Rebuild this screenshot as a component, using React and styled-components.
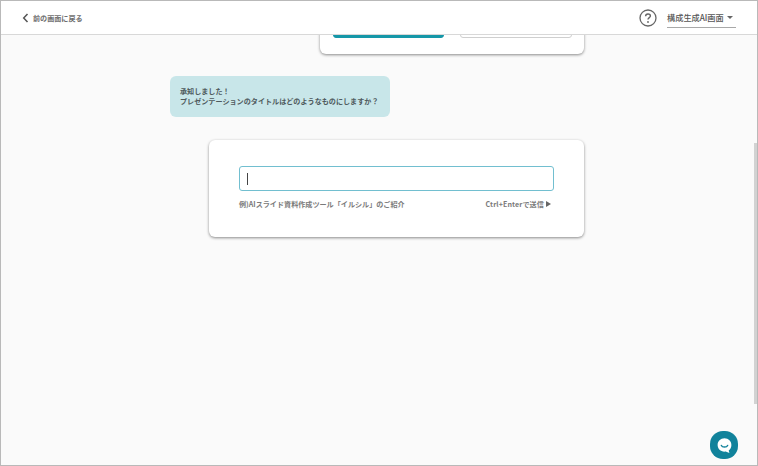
import React from 'react'
import styled, { createGlobalStyle } from 'styled-components'

const GlobalStyle = createGlobalStyle`
  html, body {
    margin: 0;
    padding: 0;
    background: #fff;
  }
  * {
    box-sizing: border-box;
  }
`

const Frame = styled.div`
  position: relative;
  width: 758px;
  height: 466px;
  display: flex;
  flex-direction: column;
  overflow: hidden;
  border: 1px solid #b9b9b9;
  background: #fafafa;
  font-family: "Noto Sans CJK JP", "Noto Sans", sans-serif;
  color: #555;
`

const Header = styled.header`
  position: relative;
  z-index: 2;
  flex: none;
  height: 34px;
  display: flex;
  align-items: center;
  justify-content: space-between;
  padding: 0 21px 0 21px;
  background: #fff;
  border-bottom: 1px solid #d8d8d8;
`

const BackLink = styled.a`
  display: flex;
  align-items: center;
  gap: 4px;
  font-size: 7.1px;
  font-weight: 700;
  color: #6e6e6e;
`

const HeaderRight = styled.div`
  display: flex;
  align-items: center;
  gap: 10px;
`

const ModeSelect = styled.div`
  width: 69px;
  height: 20px;
  display: flex;
  align-items: center;
  justify-content: space-between;
  padding: 0 3px 0 0;
  border-bottom: 1px solid #a8a8a8;
  font-size: 8.2px;
  font-weight: 500;
  white-space: nowrap;
  color: #555;
`

const Caret = styled.span`
  width: 0;
  height: 0;
  border-left: 3px solid transparent;
  border-right: 3px solid transparent;
  border-top: 3px solid #666;
`

const Scroller = styled.main`
  flex: 1;
  overflow: hidden;
`

const Thread = styled.div`
  width: 414px;
  margin: -40px 0 0 169px;
  display: flex;
  flex-direction: column;
`

const PrevCard = styled.div`
  align-self: flex-end;
  width: 264px;
  height: 59px;
  display: flex;
  justify-content: space-between;
  padding: 0 12px 16px 13px;
  background: #fff;
  border-radius: 0 0 6px 6px;
  box-shadow: 0 1px 3px rgba(0, 0, 0, 0.45);
`

const PrevButton = styled.div`
  width: ${props => props.$w}px;
  height: 43px;
  border-radius: 3px;
  background: ${props => (props.$primary ? '#1597a8' : '#fff')};
  border: 1px solid ${props => (props.$primary ? '#1597a8' : '#cfcfcf')};
`

const Bubble = styled.div`
  align-self: flex-start;
  width: 220px;
  height: 41px;
  margin-top: 22px;
  padding: 10px 10px;
  border-radius: 6px;
  background: #c8e6e9;
  font-size: 7.1px;
  font-weight: 700;
  line-height: 10px;
  white-space: nowrap;
  color: #4f5a5d;
`

const InputCard = styled.section`
  align-self: flex-end;
  width: 375px;
  height: 97px;
  margin-top: 23px;
  padding: 26px 30px 0 30px;
  border-radius: 6px;
  background: #fff;
  box-shadow: 0 1px 3px rgba(0, 0, 0, 0.45);
`

const TitleField = styled.div`
  height: 25px;
  display: flex;
  align-items: center;
  padding-left: 7px;
  border: 1px solid #72bfd0;
  border-radius: 3px;
  background: #fff;
`

const TextCursor = styled.span`
  width: 1px;
  height: 12px;
  background: #444;
`

const HintRow = styled.div`
  display: flex;
  justify-content: space-between;
  align-items: center;
  margin-top: 7px;
  padding-right: 3px;
  font-size: 7.1px;
  font-weight: 700;
  line-height: 12px;
  color: #7a7a7a;
`

const SendHint = styled.span`
  display: flex;
  align-items: center;
  gap: 2px;
  letter-spacing: 0.1px;
`

const SendArrow = styled.span`
  width: 0;
  height: 0;
  border-top: 3.5px solid transparent;
  border-bottom: 3.5px solid transparent;
  border-left: 5px solid #666;
`

const ScrollThumb = styled.div`
  position: absolute;
  top: 142px;
  right: 0;
  width: 3px;
  height: 261px;
  background: #d2d2d2;
`

const ChatButton = styled.button`
  position: absolute;
  right: 19px;
  bottom: 6px;
  width: 28px;
  height: 28px;
  display: flex;
  align-items: center;
  justify-content: center;
  padding: 0;
  border: none;
  border-radius: 13px;
  background: #11829b;
`

const BackIcon = () => (
  <svg width="7" height="10" viewBox="0 0 7 10" fill="none" stroke="#555" strokeWidth="1.5">
    <path d="M5.5 1L1.7 5L5.5 9" />
  </svg>
)

const HelpIcon = () => (
  <svg width="18" height="18" viewBox="0 0 18 18" fill="none" stroke="#666" strokeWidth="1.3">
    <circle cx="9" cy="9" r="8" />
    <path d="M6.6 7.2C6.6 5.8 7.7 5 9 5C10.4 5 11.4 5.8 11.4 7C11.4 8.6 9 8.7 9 10.6" strokeWidth="1.4" />
    <circle cx="9" cy="13" r="0.9" fill="#666" stroke="none" />
  </svg>
)

const ChatIcon = () => (
  <svg width="17" height="17" viewBox="0 0 19 19">
    <path d="M9.5 1.5C14 1.5 17.2 4.8 17.2 9C17.2 11.8 16 13.8 14.2 15L15 17.8L10.8 16.3C10.4 16.4 9.9 16.4 9.5 16.4C5 16.4 1.8 13.2 1.8 9C1.8 4.8 5 1.5 9.5 1.5Z" fill="#fff" />
    <path d="M6 9.4C7 11.8 12 11.8 13 9.4" fill="none" stroke="#11829b" strokeWidth="1.6" strokeLinecap="round" />
  </svg>
)

const App = () => {
  return (
    <Frame>
      <GlobalStyle />
      <Header>
        <BackLink>
          <BackIcon />
          前の画面に戻る
        </BackLink>
        <HeaderRight>
          <HelpIcon />
          <ModeSelect>
            構成生成AI画面
            <Caret />
          </ModeSelect>
        </HeaderRight>
      </Header>
      <Scroller>
        <Thread>
          <PrevCard>
            <PrevButton $primary $w={111} />
            <PrevButton $w={112} />
          </PrevCard>
          <Bubble>
            承知しました！
            <br />
            プレゼンテーションのタイトルはどのようなものにしますか？
          </Bubble>
          <InputCard>
            <TitleField>
              <TextCursor />
            </TitleField>
            <HintRow>
              <span>例)AIスライド資料作成ツール「イルシル」のご紹介</span>
              <SendHint>
                Ctrl+Enterで送信
                <SendArrow />
              </SendHint>
            </HintRow>
          </InputCard>
        </Thread>
      </Scroller>
      <ScrollThumb />
      <ChatButton aria-label="チャット">
        <ChatIcon />
      </ChatButton>
    </Frame>
  )
}

export default App
